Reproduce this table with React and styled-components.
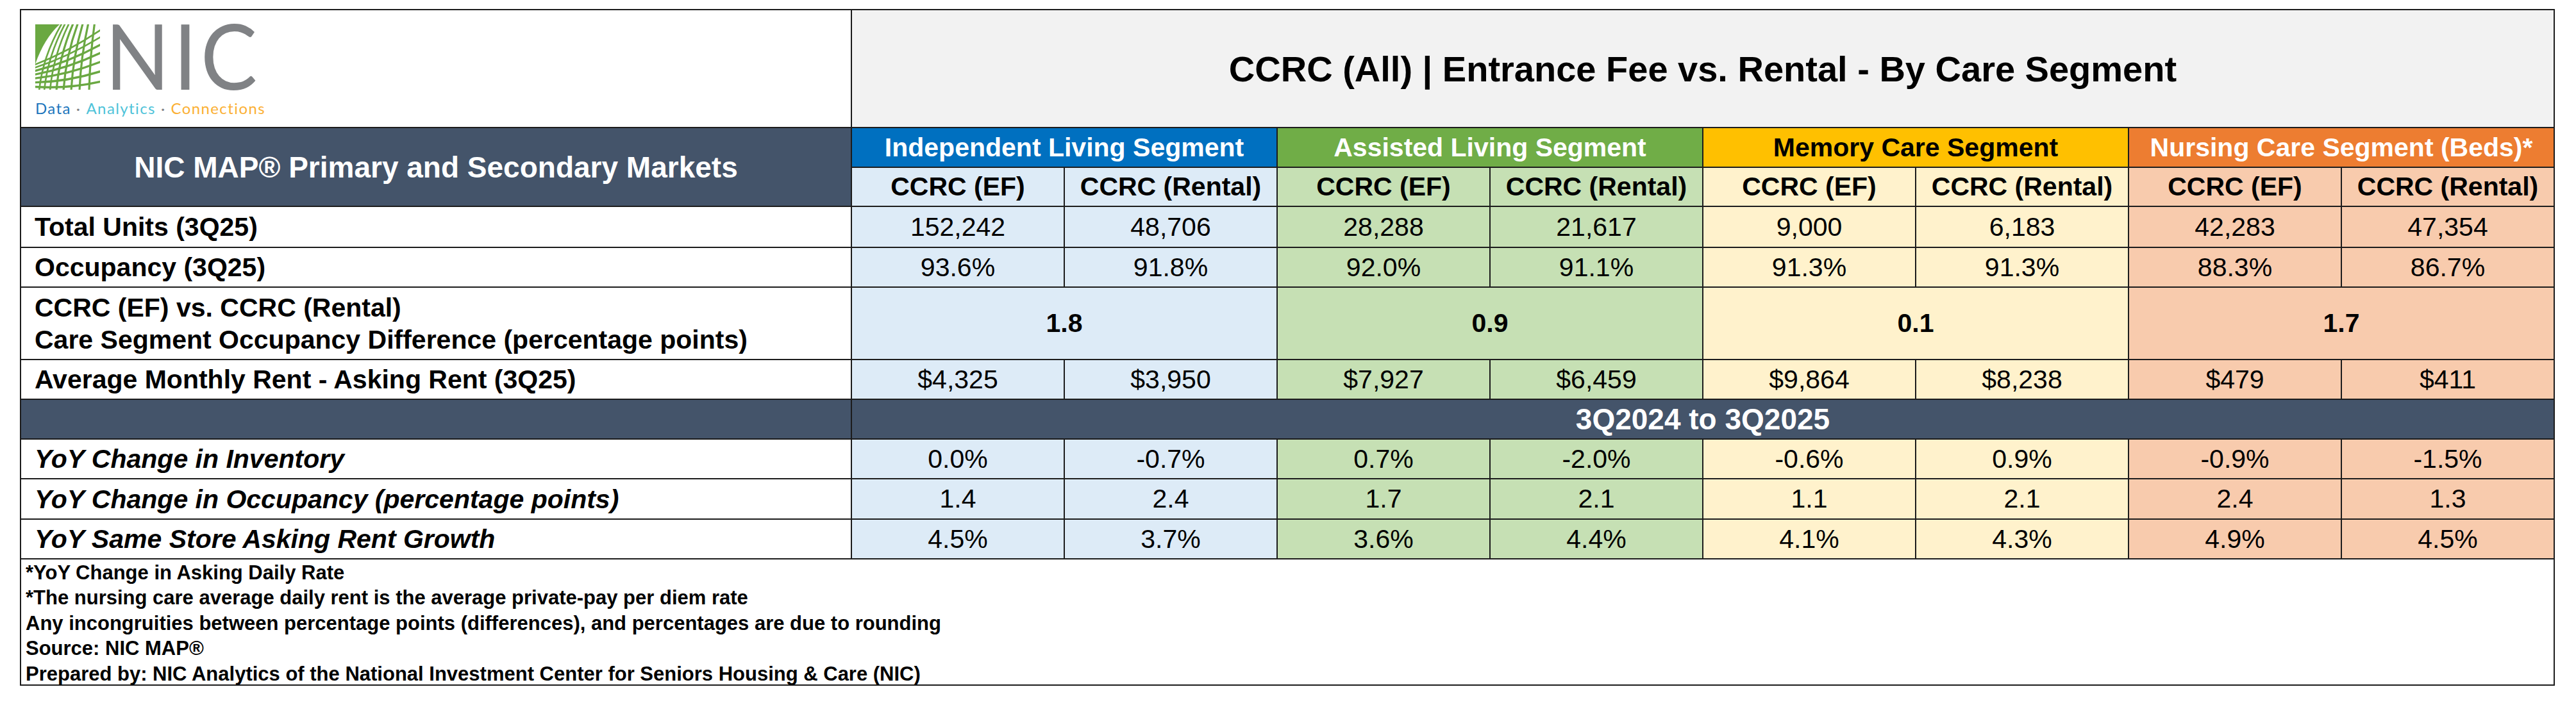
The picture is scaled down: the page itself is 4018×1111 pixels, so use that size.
import React from 'react'
import styled, { createGlobalStyle } from 'styled-components'

const GlobalStyle = createGlobalStyle`
    body {
        margin: 0;
        background: #fff;
        font-family: "Liberation Sans", Arial, sans-serif;
        color: #000;
    }
`

const Page = styled.div`
    padding: 14px 0 0 31px;
`

const Sheet = styled.div`
    display: grid;
    grid-template-columns: 1294px repeat(8, 330px);
    grid-template-rows: 182px 60px 59px 62px 60px 111px 60px 60px 60px 61px 60px 195px;
    gap: 2px;
    padding: 2px;
    width: max-content;
    background: #1c1c1c;
`

const LogoCell = styled.div`
    background: #fff;
    padding: 22px 0 0 22px;
    display: flex;
    flex-direction: column;
`

const LogoRow = styled.div`
    display: flex;
    align-items: flex-start;
    height: 102px;
`

const Wordmark = styled.span`
    margin-left: 8px;
    font-family: Lato, "Open Sans", sans-serif;
    font-size: 142px;
    line-height: 94px;
    letter-spacing: 6px;
    color: #808285;
    transform: scaleX(0.93);
    transform-origin: left center;
    white-space: nowrap;
`

const Tagline = styled.div`
    margin-top: 17px;
    display: flex;
    gap: 8px;
    font-family: Lato, "Open Sans", sans-serif;
    font-size: 24px;
    line-height: 1;
    letter-spacing: 1.4px;
    white-space: nowrap;
`

const Tag = styled.span`
    color: ${p => p.$color};
`

const TitleCell = styled.div`
    grid-column: span 8;
    background: #f2f2f2;
    display: flex;
    align-items: center;
    justify-content: center;
    font-size: 56px;
    font-weight: bold;
`

const MarketHeader = styled.div`
    grid-row: span 2;
    background: #44546a;
    color: #fff;
    display: flex;
    align-items: center;
    justify-content: center;
    font-size: 46px;
    font-weight: bold;
`

const SegmentHeader = styled.div`
    grid-column: span 2;
    background: ${p => p.$bg};
    color: ${p => p.$fg};
    display: flex;
    align-items: center;
    justify-content: center;
    font-size: 41px;
    font-weight: bold;
`

const ColumnHeader = styled.div`
    background: ${p => p.$bg};
    display: flex;
    align-items: center;
    justify-content: center;
    font-size: 41px;
    font-weight: bold;
`

const RowLabel = styled.div`
    background: #fff;
    display: flex;
    flex-direction: column;
    justify-content: center;
    padding-left: 21px;
    font-size: 41px;
    font-weight: bold;
    font-style: ${p => (p.$italic ? 'italic' : 'normal')};
    line-height: 50px;
    white-space: nowrap;
`

const ValueCell = styled.div`
    grid-column: span ${p => p.$span || 1};
    background: ${p => p.$bg};
    display: flex;
    align-items: center;
    justify-content: center;
    font-size: 41px;
    font-weight: ${p => (p.$bold ? 'bold' : 'normal')};
`

const BandCell = styled.div`
    grid-column: span ${p => p.$span || 1};
    background: #44546a;
    color: #fff;
    display: flex;
    align-items: center;
    justify-content: center;
    font-size: 46px;
    font-weight: bold;
`

const NoteBox = styled.div`
    grid-column: 1 / -1;
    background: #fff;
    padding: 1px 7px 0;
    font-size: 31px;
    font-weight: bold;
    line-height: 39.4px;
`

const segments = [
    { name: 'Independent Living Segment', head: '#0070c0', fg: '#fff', light: '#ddebf7' },
    { name: 'Assisted Living Segment', head: '#70ad47', fg: '#fff', light: '#c6e0b4' },
    { name: 'Memory Care Segment', head: '#ffc000', fg: '#000', light: '#fff2cc' },
    { name: 'Nursing Care Segment (Beds)*', head: '#ed7d31', fg: '#fff', light: '#f8cbad' },
]

const currentRows = [
    { label: 'Total Units (3Q25)', values: ['152,242', '48,706', '28,288', '21,617', '9,000', '6,183', '42,283', '47,354'] },
    { label: 'Occupancy (3Q25)', values: ['93.6%', '91.8%', '92.0%', '91.1%', '91.3%', '91.3%', '88.3%', '86.7%'] },
]

const rentRow = {
    label: 'Average Monthly Rent - Asking Rent (3Q25)',
    values: ['$4,325', '$3,950', '$7,927', '$6,459', '$9,864', '$8,238', '$479', '$411'],
}

const diffValues = ['1.8', '0.9', '0.1', '1.7']

const yoyRows = [
    { label: 'YoY Change in Inventory', values: ['0.0%', '-0.7%', '0.7%', '-2.0%', '-0.6%', '0.9%', '-0.9%', '-1.5%'] },
    { label: 'YoY Change in Occupancy (percentage points)', values: ['1.4', '2.4', '1.7', '2.1', '1.1', '2.1', '2.4', '1.3'] },
    { label: 'YoY Same Store Asking Rent Growth', values: ['4.5%', '3.7%', '3.6%', '4.4%', '4.1%', '4.3%', '4.9%', '4.5%'] },
]

const notes = [
    '*YoY Change in Asking Daily Rate',
    '*The nursing care average daily rent is the average private-pay per diem rate',
    'Any incongruities between percentage points (differences), and percentages are due to rounding',
    'Source: NIC MAP®',
    'Prepared by: NIC Analytics of the National Investment Center for Seniors Housing & Care (NIC)',
]

const meridians = [6, 14, 23, 33, 44, 56, 69, 84]
const parallels = [8, 19, 31, 44, 58, 73, 89]

// green globe square of the NIC logo
function NicMark() {
    return (
        <svg width="101" height="102" viewBox="0 0 101 102">
            <defs>
                <clipPath id="nic-fan">
                    <path d="M38 0 H101 V102 H0 V62 Q14 22 38 0 Z" />
                </clipPath>
            </defs>
            <rect x="0" y="0" width="101" height="102" fill="#6aa842" />
            <g clipPath="url(#nic-fan)">
                <rect x="0" y="0" width="101" height="102" fill="#fff" />
                {meridians.map((xb) => {
                    const xt = 38 + xb * 0.65
                    return (
                        <path key={'m' + xb} d={`M${xb} 104 Q${xb + (xt - xb) * 0.15} 50 ${xt} -2`}
                            stroke="#6aa842" strokeWidth={xb < 30 ? 2.6 : 3.2} fill="none" />
                    )
                })}
                {parallels.map((yr) => {
                    const yl = 60 + yr * 0.42
                    return (
                        <path key={'p' + yr} d={`M-2 ${yl} Q50 ${(yl + yr) / 2 + 8} 103 ${yr}`}
                            stroke="#6aa842" strokeWidth={yr < 30 ? 2.6 : 3.4} fill="none" />
                    )
                })}
            </g>
        </svg>
    )
}

function DataRow({ label, values, italic }) {
    return (
        <>
            <RowLabel $italic={italic}>{label}</RowLabel>
            {values.map((v, i) => (
                <ValueCell key={i} $bg={segments[Math.floor(i / 2)].light}>{v}</ValueCell>
            ))}
        </>
    )
}

export default function App() {
    return (
        <Page>
            <GlobalStyle />
            <Sheet>
                <LogoCell>
                    <LogoRow>
                        <NicMark />
                        <Wordmark>NIC</Wordmark>
                    </LogoRow>
                    <Tagline>
                        <Tag $color="#1c75bc">Data</Tag>
                        <Tag $color="#808285">·</Tag>
                        <Tag $color="#4fc3d9">Analytics</Tag>
                        <Tag $color="#808285">·</Tag>
                        <Tag $color="#fbb034">Connections</Tag>
                    </Tagline>
                </LogoCell>
                <TitleCell>CCRC (All) | Entrance Fee vs. Rental - By Care Segment</TitleCell>

                <MarketHeader>NIC MAP® Primary and Secondary Markets</MarketHeader>
                {segments.map((s) => (
                    <SegmentHeader key={s.name} $bg={s.head} $fg={s.fg}>{s.name}</SegmentHeader>
                ))}
                {segments.map((s) => (
                    <React.Fragment key={s.name}>
                        <ColumnHeader $bg={s.light}>CCRC (EF)</ColumnHeader>
                        <ColumnHeader $bg={s.light}>CCRC (Rental)</ColumnHeader>
                    </React.Fragment>
                ))}

                {currentRows.map((r) => (
                    <DataRow key={r.label} label={r.label} values={r.values} />
                ))}

                <RowLabel>
                    <span>CCRC (EF) vs. CCRC (Rental)</span>
                    <span>Care Segment Occupancy Difference (percentage points)</span>
                </RowLabel>
                {diffValues.map((v, i) => (
                    <ValueCell key={i} $span={2} $bg={segments[i].light} $bold>{v}</ValueCell>
                ))}

                <DataRow label={rentRow.label} values={rentRow.values} />

                <BandCell />
                <BandCell $span={8}>3Q2024 to 3Q2025</BandCell>

                {yoyRows.map((r) => (
                    <DataRow key={r.label} label={r.label} values={r.values} italic />
                ))}

                <NoteBox>
                    {notes.map((n) => (
                        <div key={n}>{n}</div>
                    ))}
                </NoteBox>
            </Sheet>
        </Page>
    )
}
